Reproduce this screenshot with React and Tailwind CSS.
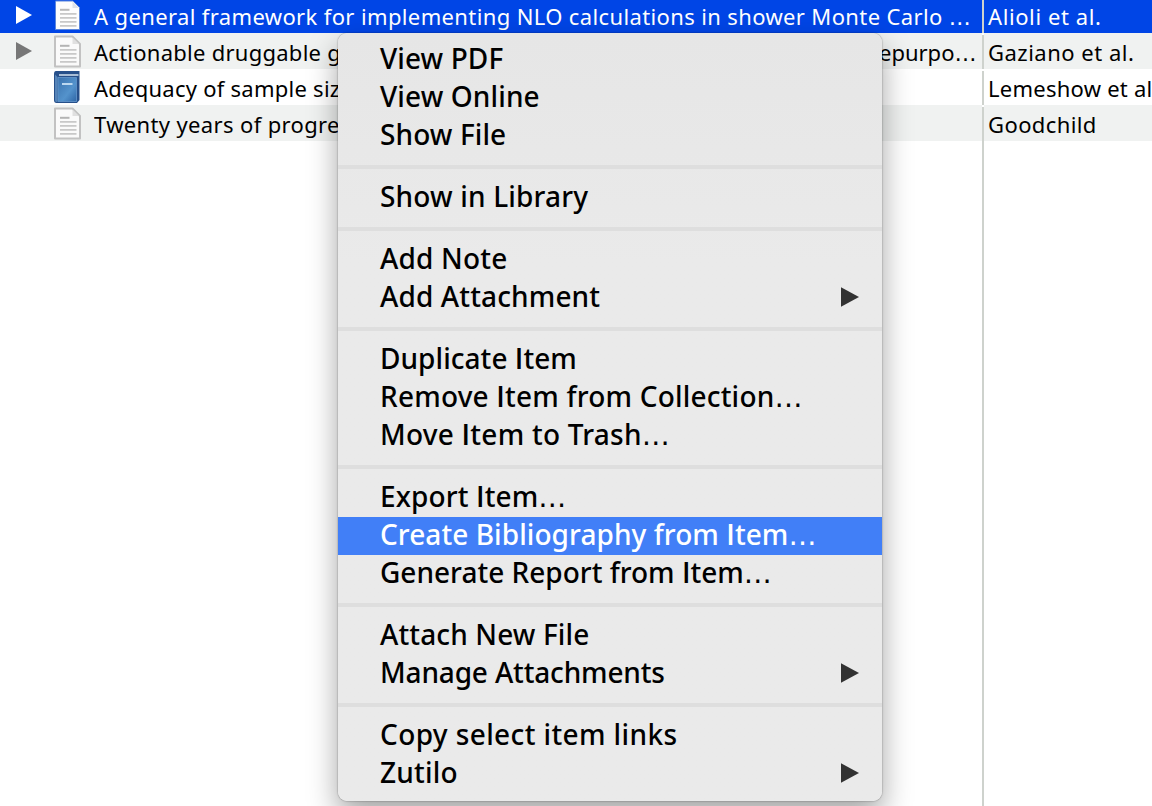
const MENU = [
  [
    { label: "View PDF", tracking: "tracking-[0.1px]" },
    { label: "View Online", tracking: "tracking-[0.12px]" },
    { label: "Show File", tracking: "tracking-[0.1px]" },
  ],
  [{ label: "Show in Library", tracking: "tracking-[0.17px]" }],
  [
    { label: "Add Note", tracking: "tracking-[0.18px]" },
    { label: "Add Attachment", tracking: "tracking-[0.13px]", submenu: true },
  ],
  [
    { label: "Duplicate Item", tracking: "tracking-[0.05px]" },
    { label: "Remove Item from Collection…", tracking: "tracking-[0.2px]" },
    { label: "Move Item to Trash…", tracking: "tracking-[0.24px]" },
  ],
  [
    { label: "Export Item…", tracking: "tracking-[0.12px]" },
    { label: "Create Bibliography from Item…", tracking: "tracking-[0.07px]", active: true },
    { label: "Generate Report from Item…", tracking: "tracking-[0.01px]" },
  ],
  [
    { label: "Attach New File", tracking: "tracking-[0.13px]" },
    { label: "Manage Attachments", tracking: "tracking-[-0.16px]", submenu: true },
  ],
  [
    { label: "Copy select item links", tracking: "tracking-[0.39px]" },
    { label: "Zutilo", tracking: "tracking-[0.2px]", submenu: true },
  ],
];

const ROWS = [
  {
    title: "A general framework for implementing NLO calculations in shower Monte Carlo …",
    tracking: "tracking-[0.37px]",
    creator: "Alioli et al.",
    creatorTracking: "tracking-[0.6px]",
    icon: "page",
    twisty: "text-white",
    row: "bg-[#0045e6] text-white",
    selected: true,
  },
  {
    title: "Actionable druggable genome-wide Mendelian randomization identifies r",
    tail: "epurpo…",
    tracking: "tracking-[0.26px]",
    creator: "Gaziano et al.",
    creatorTracking: "tracking-[0.5px]",
    icon: "page",
    twisty: "text-[#777777]",
    row: "bg-[#f0f2f1]",
  },
  {
    title: "Adequacy of sample size in health studies",
    tracking: "tracking-[0.25px]",
    creator: "Lemeshow et al.",
    creatorTracking: "tracking-[0.25px]",
    icon: "book",
    row: "bg-white",
  },
  {
    title: "Twenty years of progress: GIScience in 2010",
    tracking: "tracking-[0.36px]",
    creator: "Goodchild",
    creatorTracking: "tracking-[0.4px]",
    icon: "page",
    row: "bg-[#f0f2f1]",
  },
];

function PageIcon({ selected }) {
  if (selected) {
    return (
      <svg width="30" height="34" viewBox="0 0 30 34" className="block">
        <path d="M3.500 3H21L27.500 9.500V31.500H3.500Z" fill="#fdfdfd" stroke="#5b86dc" strokeWidth="1" />
        <path d="M20.500 3.500V10H27Z" fill="#dfe3ea" />
        <path d="M8 11.800H17.500" stroke="#b8b8b8" strokeWidth="2" />
        <path d="M8 15.800H24.500M8 19.800H24.500M8 23.800H24.500M8 27.800H24.500" stroke="#c8c8c8" strokeWidth="1.800" />
      </svg>
    );
  }
  return (
    <svg width="30" height="34" viewBox="0 0 30 34" className="block">
      <path d="M3 2.500H20.500L28 10V32.500H3Z" fill="#fafafa" stroke="#c2c2c2" strokeWidth="2" strokeLinejoin="round" />
      <path d="M20.500 3.500V10H27Z" fill="#e0e0e0" />
      <path d="M8 11.800H17.500" stroke="#b4b4b4" strokeWidth="2" />
      <path d="M8 15.800H24.500M8 19.800H24.500M8 23.800H24.500M8 27.800H24.500" stroke="#c8c8c8" strokeWidth="1.800" />
    </svg>
  );
}

function BookIcon() {
  return (
    <svg width="30" height="34" viewBox="0 0 30 34" className="block">
      <defs>
        <linearGradient id="cover" x1="0" y1="0" x2="1" y2="1">
          <stop offset="0" stopColor="#3a72ae" />
          <stop offset="0.6" stopColor="#5493cc" />
          <stop offset="1" stopColor="#2f66a6" />
        </linearGradient>
      </defs>
      <path d="M4 1H27.500V30L25 33H4.500Q2 33 2 30V4Q2 1 4 1Z" fill="#27508a" />
      <path d="M7 4H26.500V6H7Z" fill="#a9bed6" />
      <path d="M3 4.500L5.500 7V32H4.500Q3 32 3 30Z" fill="#5584b8" />
      <path d="M6 7.500H24.500V31.500H6Z" fill="url(#cover)" stroke="#6497cb" strokeWidth="0.800" />
      <path d="M10 14H20.500" stroke="#bcd8f0" strokeWidth="2" />
    </svg>
  );
}

/* Capital I is set without serifs, and the ellipsis in a wider face. */
function Label({ text }) {
  return text.split(/(I|…)/).map((part, i) => {
    if (part === "I") return <span key={i} className="font-['Open_Sans'] font-semibold">I</span>;
    if (part === "…") return <span key={i} className="font-['DejaVu_Sans'] font-normal">…</span>;
    return part;
  });
}

function ItemRow({ item }) {
  return (
    <div className={"flex h-9 text-[22px] leading-[39px] whitespace-pre " + item.row}>
      <div className="flex h-9 w-[982px] shrink-0 overflow-hidden">
        <div className="w-[52px] shrink-0 pt-[9px] pl-4">
          {item.twisty && (
            <svg width="16" height="18" viewBox="0 0 16 18" className={"block " + item.twisty}>
              <path d="M0 0L16 9L0 18Z" fill="currentColor" />
            </svg>
          )}
        </div>
        <div className="w-[42px] shrink-0 pt-px">
          {item.icon === "book" ? <BookIcon /> : <PageIcon selected={item.selected} />}
        </div>
        <div className={"min-w-0 flex-1 overflow-hidden " + item.tracking}>
          {item.title.replace("…", "")}
          {item.title.endsWith("…") && <Label text="…" />}
        </div>
        {item.tail && (
          <div className="w-[103px] shrink-0">
            <Label text={item.tail} />
          </div>
        )}
      </div>
      <div className="w-0.5 shrink-0 bg-white pt-0.5">
        <div className="h-full bg-[#ced2cd]" />
      </div>
      <div className={"min-w-0 flex-1 overflow-hidden pl-1 " + item.creatorTracking}>{item.creator}</div>
    </div>
  );
}

function MenuItem({ item }) {
  return (
    <div
      className={
        "flex h-[38px] justify-between pr-[23px] pl-[42px] text-[28px] leading-[34px] font-medium whitespace-pre " +
        (item.active ? "bg-[#417ff7] text-white" : "text-black")
      }
    >
      <span className={item.tracking}>
        <Label text={item.label} />
      </span>
      {item.submenu && (
        <svg width="18" height="20" viewBox="0 0 18 20" className="mt-2 block">
          <path d="M0 0.300L18 10L0 19.700Z" fill="#323232" />
        </svg>
      )}
    </div>
  );
}

export default function App() {
  return (
    <div className="relative flex h-[806px] w-[1152px] flex-col overflow-hidden bg-white font-['Noto_Sans',sans-serif] text-black">
      <div className="-mt-[3px] flex flex-col">
        {ROWS.map((item) => (
          <ItemRow key={item.creator} item={item} />
        ))}
      </div>
      <div className="flex flex-1">
        <div className="ml-[982px] w-0.5 bg-[#ced2cd]" />
      </div>

      <div className="absolute top-[33px] left-[338px] w-[544px] rounded-[9px] bg-linear-to-b from-[#e6e6e6] to-[#eaeaea] to-30% py-2 shadow-[0_0_1.5px_rgba(0,0,0,0.6),0_14px_30px_rgba(0,0,0,0.36)]">
        {MENU.map((group, i) => (
          <div key={i}>
            {i > 0 && <div className="my-2.5 h-1 bg-[#dedede]" />}
            {group.map((item) => (
              <MenuItem key={item.label} item={item} />
            ))}
          </div>
        ))}
      </div>
    </div>
  );
}
